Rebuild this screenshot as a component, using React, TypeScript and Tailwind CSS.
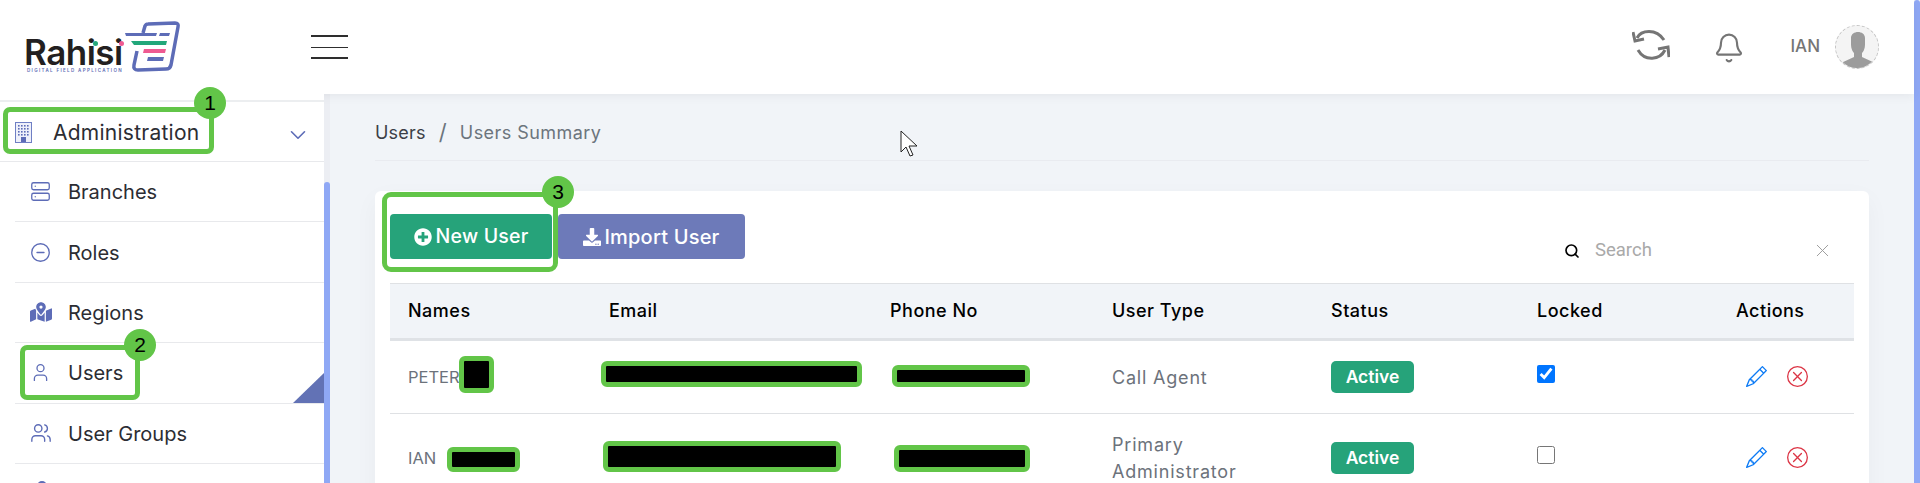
import { Bell, ChevronDown, CircleMinus, Search, Server, User, Users, X } from "lucide-react";
import { BsPencil, BsXCircle } from "react-icons/bs";
import { FaDownload, FaMapMarkedAlt, FaPlusCircle } from "react-icons/fa";

const sans = "font-['Inter','Noto_Sans',sans-serif]";

function Logo() {
  return (
    <div className="relative w-[160px] h-[60px]">
      <span className="absolute left-[-2px] top-[21px] text-[35px] leading-[30px] font-semibold tracking-[-0.5px] text-[#231f20]">
        Rahisi
      </span>
      <span className="absolute left-[1px] top-[52px] text-[4.5px] leading-[6px] font-semibold tracking-[1.35px] text-[#5c6bb5] whitespace-nowrap">
        DIGITAL FIELD APPLICATION
      </span>
      <svg className="absolute left-0 top-0" width="160" height="60" viewBox="0 0 160 60" fill="none">
        <path
          d="M117 17 L119 10 Q120 8 122 8 L149 7 Q153 7 152 11 L145 49 Q144 53 140 53 L112 54 Q107 54 108 49 L111 35"
          stroke="#5d6cb7"
          strokeWidth="3.5"
        />
        <path d="M99 17 H131 L130 20 H100 Z" fill="#5d6cb7" />
        <path d="M134 17 H144 L143 20 H133 Z" fill="#5d6cb7" />
        <path d="M105 25 H141 L140 29 H108 Z" fill="#22a77a" />
        <path d="M118 33 H140 L139 37 H117 Z" fill="#ee5a92" />
        <path d="M122 41 H138 L137 45 H121 Z" fill="#5d6cb7" />
      </svg>
      <span className="absolute left-[66.5px] top-[24.5px] w-[5px] h-[5px] rounded-full bg-[#22a77a]" />
      <span className="absolute left-[92.5px] top-[24.5px] w-[5px] h-[5px] rounded-full bg-[#ee5a92]" />
    </div>
  );
}

function Building() {
  return (
    <svg width="17" height="21" viewBox="0 0 17 21" fill="none">
      <rect x="0.5" y="0.5" width="16" height="20" fill="#eef0fa" stroke="#6f7fc4" />
      <g fill="#5d6cb7">
        {[3, 6, 9, 12].map((y) =>
          [3, 6, 9, 12].map((x) => <rect key={`${x}-${y}`} x={x} y={y} width="1.6" height="1.6" />)
        )}
      </g>
      <rect x="6" y="15" width="5" height="5" fill="#5d6cb7" />
    </svg>
  );
}

function Badge({ n, className }: { n: number; className: string }) {
  return (
    <span
      className={`absolute w-8 h-8 rounded-full bg-[#62c548] text-black text-[21px] leading-8 text-center font-['Liberation_Sans',sans-serif] ${className}`}
    >
      {n}
    </span>
  );
}

function Redact({ className }: { className: string }) {
  return <span className={`absolute bg-black border-[5px] border-[#62c548] rounded-[6px] ${className}`} />;
}

function NavItem({ icon, label }: { icon: React.ReactNode; label: string }) {
  return (
    <div className="h-[60.4px] flex items-center border-b border-[#e8e9ec] ml-[15px]">
      <span className="w-[53px] pl-[15px] flex items-center text-[#5d6cb7]">{icon}</span>
      <span className="text-[20px] mt-[1px] text-[#2c2d33]">{label}</span>
    </div>
  );
}

function Sidebar() {
  return (
    <aside className="relative z-20 w-[324px] h-full bg-white shrink-0">
      <div className="h-[8px] border-b-2 border-[#eceef0]" />
      <div className="relative h-[60px] flex items-center border-b border-[#e8e9ec]">
        <span className="ml-[15px] w-[38px] mt-[2px]">
          <Building />
        </span>
        <span className="text-[21px] tracking-[0.25px] text-[#2c2d33] mt-[2px]">Administration</span>
        <ChevronDown className="absolute left-[285px] top-[20px] text-[#5d6cb7]" size={26} strokeWidth={1.5} />
      </div>
      <NavItem icon={<Server size={21} strokeWidth={1.5} />} label="Branches" />
      <NavItem icon={<CircleMinus size={21} strokeWidth={1.5} />} label="Roles" />
      <NavItem icon={<FaMapMarkedAlt size={22} />} label="Regions" />
      <NavItem icon={<User size={21} strokeWidth={1.5} />} label="Users" />
      <NavItem icon={<Users size={22} strokeWidth={1.5} />} label="User Groups" />
      <div className="ml-[37px] mt-[17px] w-[10px] h-[10px] rounded-full border-2 border-[#5d6cb7]" />
      {/* triangle in the corner */}
      <svg className="absolute left-[293px] top-[279px]" width="31" height="31" viewBox="0 0 31 31">
        <path d="M31 0 V30 H0 Z" fill="#6272b5" />
      </svg>
      {/* annotations */}
      <span className="absolute left-[3px] top-[13px] w-[211px] h-[47px] border-[5px] border-[#62c548] rounded-[7px]" />
      <Badge n={1} className="left-[194px] top-[-7px]" />
      <span className="absolute left-[20px] top-[251px] w-[120px] h-[55px] border-[5px] border-[#62c548] rounded-[7px]" />
      <Badge n={2} className="left-[124px] top-[235px]" />
    </aside>
  );
}

const cols = "grid grid-cols-[219px_281px_222px_219px_206px_199px_118px]";

function Row({ name, userType, locked, tall }: { name: string; userType: React.ReactNode; locked?: boolean; tall?: boolean }) {
  return (
    <div className={`${cols} items-center text-[#6c727b] ${tall ? "h-[88px]" : "h-[73px] border-b border-[#dfe1e4]"}`}>
      <span className="pl-[18px] text-[16.5px]">{name}</span>
      <span />
      <span />
      <span className="text-[18px] tracking-[0.8px] leading-[27px]">{userType}</span>
      <span>
        <span className="w-[83px] h-8 rounded-[5px] bg-[#26a37a] text-white font-semibold text-[17.5px] flex items-center justify-center">
          Active
        </span>
      </span>
      <span className="flex">
        <input type="checkbox" readOnly checked={!!locked} className="w-[18px] h-[18px] accent-[#0075ff] mb-[6px]" />
      </span>
      <span className="pl-[10px] flex items-center gap-5 mb-[2px]">
        <BsPencil size={21} className="text-[#0d7bf5]" />
        <BsXCircle size={21} className="text-[#dc3545]" />
      </span>
    </div>
  );
}

export default function App() {
  return (
    <div className={`relative w-[1920px] h-[483px] overflow-hidden flex bg-[#f1f4f8] ${sans}`}>
      <div className="flex-1 flex flex-col min-w-0">
        <header className="relative z-10 h-[94px] bg-white shadow-[0_2px_10px_rgba(0,0,0,0.06)] flex items-center shrink-0">
          <div className="ml-[26px] w-[285px] mt-[-2px]">
            <Logo />
          </div>
          <div className="w-[37px] h-[24px] flex flex-col justify-between">
            <span className="h-[2px] bg-[#2e2e2e]" />
            <span className="h-[1px] bg-[#2e2e2e]" />
            <span className="h-[2px] bg-[#2e2e2e]" />
          </div>
          <div className="ml-auto flex items-center mr-[35px]">
            <svg width="38" height="32" viewBox="0 0 38 32" fill="none" stroke="#757575" strokeWidth="3" className="mb-[4px]">
              <path d="M5 9 C9 1 24 -1 32 11" />
              <path d="M1 3 L3 12 L12 10" />
              <path d="M33 21 C28 31 13 33 6 21" />
              <path d="M37 28 L36 18 L26 20" />
            </svg>
            <Bell size={32} strokeWidth={1.6} className="ml-[43px] mt-[2px] text-[#757575]" />
            <span className="ml-[45px] text-[17px] font-medium text-[#757575]">IAN</span>
            <div className="ml-[15px] relative w-[44px] h-[44px] rounded-full border border-dashed border-[#c4c4c4] bg-[#f4f4f4] overflow-hidden">
              <svg width="44" height="44" viewBox="0 0 44 44" fill="#9c9c9c">
                <path d="M15 12 C15 4 29 4 29 12 L29 19 C29 23 27 26 26 27 L26 31 L39 37 L41 44 L3 44 L5 37 L18 31 L18 27 C17 26 15 23 15 19 Z" />
              </svg>
            </div>
          </div>
        </header>
        <div className="flex-1 flex min-h-0">
          <Sidebar />
          <div className="relative w-[6px] h-full bg-[#eceef3] shrink-0">
            <div className="absolute left-0 top-[88px] bottom-0 w-full rounded-t-[3px] bg-[#8fa8f5]" />
          </div>
          <main className="flex-1 min-w-0 pl-[45px] pr-[45px]">
            <div className="h-[67px] flex items-center border-b border-[#e9ebf0] text-[18px] tracking-[0.2px]">
              <div className="flex items-center mt-[10px]">
                <span className="text-[#3c3f47]">Users</span>
                <span className="mx-[13px] text-[#6c757d] text-[22px]">/</span>
                <span className="text-[#6c757d] tracking-[0.45px]">Users Summary</span>
              </div>
            </div>
            <section className="relative mt-[30px] h-[310px] bg-white rounded-[6px] px-[15px] shadow-[0_8px_24px_rgba(0,0,0,0.04)]">
              <div className="flex items-start pt-[23px] h-[92px]">
                <button className="w-[162px] h-[45px] rounded-[4px] bg-[#26a37a] text-white text-[19.5px] tracking-[0.2px] font-medium flex items-center justify-center gap-[4px]">
                  <FaPlusCircle size={18} />
                  <span className="mt-[1px]">New User</span>
                </button>
                <button className="ml-[6px] w-[187px] h-[45px] rounded-[4px] bg-[#6d7ab9] text-white text-[20px] tracking-[0.2px] font-medium flex items-center justify-center gap-[3px]">
                  <FaDownload size={18} />
                  <span className="mt-[1px]">Import User</span>
                </button>
                <div className="ml-auto mr-[21px] mt-[23px] w-[269px] flex items-center text-[#a9a9a9]">
                  <Search size={16} strokeWidth={2.5} className="text-black" />
                  <span className="ml-[15px] text-[18.5px] font-['Roboto',sans-serif]">Search</span>
                  <X size={21} strokeWidth={1.1} className="ml-auto text-[#9b9b9b]" />
                </div>
              </div>
              <div className={`${cols} h-[58px] pb-[1px] items-center bg-[#f1f4f8] border-t border-[#dfe1e4] border-b-[3px] border-b-[#dfe2e6] text-[18px] tracking-[0.5px] font-medium text-black`}>
                <span className="pl-[18px]">Names</span>
                <span>Email</span>
                <span>Phone No</span>
                <span>User Type</span>
                <span>Status</span>
                <span>Locked</span>
                <span>Actions</span>
              </div>
              <Row name="PETER" userType="Call Agent" locked />
              <Row
                name="IAN"
                userType={
                  <>
                    Primary
                    <br />
                    Administrator
                  </>
                }
                tall
              />
              {/* annotations over the card */}
              <span className="absolute left-[7px] top-[1px] w-[176px] h-[80px] border-[5px] border-[#62c548] rounded-[9px]" />
              <Badge n={3} className="left-[167px] top-[-15px]" />
              <Redact className="left-[84px] top-[165px] w-[35px] h-[37px]" />
              <Redact className="left-[226px] top-[170px] w-[261px] h-[26px]" />
              <Redact className="left-[517px] top-[174px] w-[138px] h-[22px]" />
              <Redact className="left-[72px] top-[256px] w-[73px] h-[25px]" />
              <Redact className="left-[228px] top-[250px] w-[238px] h-[31px]" />
              <Redact className="left-[519px] top-[254px] w-[136px] h-[27px]" />
            </section>
          </main>
        </div>
      </div>
      <div className="w-[6px] h-full bg-[#8fa8f5] rounded-t-[3px] shrink-0" />
      {/* mouse pointer */}
      <svg className="absolute left-[900px] top-[130px]" width="20" height="28" viewBox="0 0 20 28" fill="#fff" stroke="#222" strokeWidth="1">
        <path d="M1 1 V22 L6 17 L10 26 L13 25 L9 16 L17 16 Z" />
      </svg>
    </div>
  );
}
